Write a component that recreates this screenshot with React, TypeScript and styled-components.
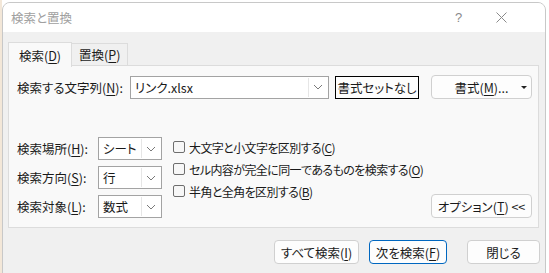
import styled, { createGlobalStyle } from "styled-components";

const GlobalStyle = createGlobalStyle`
  html, body {
    margin: 0;
    padding: 0;
    background: #ffffff;
  }
  body {
    font-family: "Noto Sans CJK JP", "Noto Sans", sans-serif;
    font-size: 12.5px;
    font-feature-settings: "palt";
    color: #1a1a1a;
  }
`;

const Page = styled.div`
  width: 549px;
  height: 273px;
  overflow: hidden;
  padding: 2px 0 0 2px;
  box-sizing: border-box;
  background: linear-gradient(to right, #f3e7d8 0, #f3e7d8 2px, #fff 2px);
`;

const Dialog = styled.div`
  width: 544px;
  height: 280px;
  box-sizing: border-box;
  border: 1px solid #c8c8c8;
  border-radius: 8px 8px 0 0;
  background: #f0f0f0;
  overflow: hidden;
  display: flex;
  flex-direction: column;
`;

const TitleBar = styled.div`
  height: 29px;
  background: #ffffff;
  display: flex;
  align-items: center;
  padding: 0 22px 0 8px;
`;

const Title = styled.div`
  flex: 1;
  color: #a0a0a0;
`;

const TitleButton = styled.div`
  width: 43px;
  display: flex;
  justify-content: center;
  color: #8a8a8a;
  font-family: "Liberation Sans", sans-serif;
  font-size: 13px;
`;

const Body = styled.div`
  padding: 10px 0 0 5px;
`;

const TabStrip = styled.div`
  display: flex;
  align-items: flex-end;
  height: 23px;
`;

const Tab = styled.div<{ $active?: boolean }>`
  box-sizing: border-box;
  height: ${(p) => (p.$active ? "25px" : "22px")};
  padding: ${(p) => (p.$active ? "0 10px" : "0 7px")};
  display: flex;
  align-items: center;
  white-space: nowrap;
  border: 1px solid #dcdcdc;
  border-bottom: none;
  background: ${(p) => (p.$active ? "#f9f9f9" : "#f0f0f0")};
  position: relative;
  z-index: ${(p) => (p.$active ? 2 : 1)};
  margin-bottom: ${(p) => (p.$active ? "-2px" : "0")};
  margin-left: ${(p) => (p.$active ? "0" : "-1px")};
`;

const Panel = styled.div`
  width: 531px;
  height: 163px;
  box-sizing: border-box;
  border: 1px solid #dcdcdc;
  background: #f9f9f9;
  padding: 9px 0 9px 8px;
  display: flex;
  flex-direction: column;
  justify-content: space-between;
`;

const Row = styled.div`
  display: flex;
  align-items: center;
`;

const Label = styled.div<{ $w: number }>`
  width: ${(p) => p.$w}px;
  flex-shrink: 0;
  white-space: nowrap;
`;

const U = styled.span`
  text-decoration: underline;
  text-underline-offset: 2px;
`;

const Combo = styled.div<{ $w: number }>`
  width: ${(p) => p.$w}px;
  height: 23px;
  box-sizing: border-box;
  border: 1px solid #a3a3a3;
  background: #ffffff;
  display: flex;
  align-items: center;
  padding-left: 4px;
  flex-shrink: 0;
`;

const ComboText = styled.div`
  flex: 1;
  white-space: nowrap;
`;

const ComboArrow = styled.div`
  width: 18px;
  height: 19px;
  border-left: 1px solid #e6e6e6;
  display: flex;
  align-items: center;
  justify-content: center;
  margin-right: 1px;
`;

const Spacer = styled.div<{ $w: number }>`
  width: ${(p) => p.$w}px;
  flex-shrink: 0;
`;

const Button = styled.div<{ $w: number; $variant?: "focus" | "primary" }>`
  width: ${(p) => p.$w}px;
  height: ${(p) => (p.$variant === "focus" ? "23px" : "24px")};
  box-sizing: border-box;
  flex-shrink: 0;
  display: flex;
  align-items: center;
  justify-content: center;
  background: #fdfdfd;
  white-space: nowrap;
  border: 1px solid
    ${(p) =>
      p.$variant === "focus"
        ? "#000000"
        : p.$variant === "primary"
        ? "#0067c0"
        : "#d0d0d0"};
  border-radius: ${(p) => (p.$variant === "focus" ? "0" : "4px")};
  position: relative;
`;

const DropMark = styled.span`
  position: absolute;
  right: 4px;
  top: 10px;
  width: 0;
  height: 0;
  border-left: 3px solid transparent;
  border-right: 3px solid transparent;
  border-top: 3px solid #222;
`;

const Lower = styled.div`
  display: flex;
  align-items: flex-end;
`;

const Selects = styled.div`
  display: flex;
  flex-direction: column;
  gap: 6px;
  flex-shrink: 0;
`;

const Checks = styled.div`
  display: flex;
  flex-direction: column;
  gap: 8px;
  margin-left: 11px;
  align-self: flex-start;
  padding-top: 3px;
  flex: 1;
  min-width: 0;
`;

const CheckRow = styled.div`
  display: flex;
  align-items: center;
  gap: 4px;
  height: 14px;
  white-space: nowrap;
  font-size: 12px;
  letter-spacing: -0.6px;
`;

const Box = styled.div`
  width: 12px;
  height: 12px;
  flex-shrink: 0;
  box-sizing: border-box;
  border: 1px solid #6e6e6e;
  border-radius: 2px;
  background: #f7f7f7;
`;

const OptionsWrap = styled.div`
  margin-right: 6px;
  flex-shrink: 0;
`;

const Footer = styled.div`
  display: flex;
  justify-content: flex-end;
  padding: 12px 5px 0 0;
  gap: 10px;
`;

const Chevron = () => (
  <svg width="10" height="6" viewBox="0 0 10 6">
    <path d="M1 1 L5 5 L9 1" fill="none" stroke="#7a7a7a" strokeWidth="1" />
  </svg>
);

const Select = ({ w, children }: { w: number; children: React.ReactNode }) => (
  <Combo $w={w}>
    <ComboText>{children}</ComboText>
    <ComboArrow>
      <Chevron />
    </ComboArrow>
  </Combo>
);

export default function App() {
  return (
    <>
      <GlobalStyle />
      <Page>
        <Dialog>
          <TitleBar>
            <Title>検索と置換</Title>
            <TitleButton>?</TitleButton>
            <TitleButton>
              <svg width="11" height="11" viewBox="0 0 11 11">
                <path d="M0.5 0.5 L10.5 10.5 M10.5 0.5 L0.5 10.5" stroke="#8a8a8a" strokeWidth="1" />
              </svg>
            </TitleButton>
          </TitleBar>
          <Body>
            <TabStrip>
              <Tab $active>
                検索(<U>D</U>)
              </Tab>
              <Tab>
                置換(<U>P</U>)
              </Tab>
            </TabStrip>
            <Panel>
              <Row>
                <Label $w={113}>
                  検索する文字列(<U>N</U>):
                </Label>
                <Select w={199}>リンク.xlsx</Select>
                <Spacer $w={6} />
                <Button $w={84} $variant="focus">
                  書式セットなし
                </Button>
                <Spacer $w={12} />
                <Button $w={101}>
                  書式(<U>M</U>)...
                  <DropMark />
                </Button>
              </Row>
              <Lower>
                <Selects>
                  <Row>
                    <Label $w={81}>
                      検索場所(<U>H</U>):
                    </Label>
                    <Select w={64}>シート</Select>
                  </Row>
                  <Row>
                    <Label $w={81}>
                      検索方向(<U>S</U>):
                    </Label>
                    <Select w={64}>行</Select>
                  </Row>
                  <Row>
                    <Label $w={81}>
                      検索対象(<U>L</U>):
                    </Label>
                    <Select w={64}>数式</Select>
                  </Row>
                </Selects>
                <Checks>
                  <CheckRow>
                    <Box />
                    <span>
                      大文字と小文字を区別する(<U>C</U>)
                    </span>
                  </CheckRow>
                  <CheckRow>
                    <Box />
                    <span>
                      セル内容が完全に同一であるものを検索する(<U>O</U>)
                    </span>
                  </CheckRow>
                  <CheckRow>
                    <Box />
                    <span>
                      半角と全角を区別する(<U>B</U>)
                    </span>
                  </CheckRow>
                </Checks>
                <OptionsWrap>
                  <Button $w={101}>
                    オプション(<U>T</U>) &lt;&lt;
                  </Button>
                </OptionsWrap>
              </Lower>
            </Panel>
            <Footer>
              <Button $w={85}>
                すべて検索(<U>I</U>)
              </Button>
              <Button $w={78} $variant="primary">
                次を検索(<U>F</U>)
              </Button>
              <Spacer $w={0} />
              <Button $w={73}>閉じる</Button>
            </Footer>
          </Body>
        </Dialog>
      </Page>
    </>
  );
}
